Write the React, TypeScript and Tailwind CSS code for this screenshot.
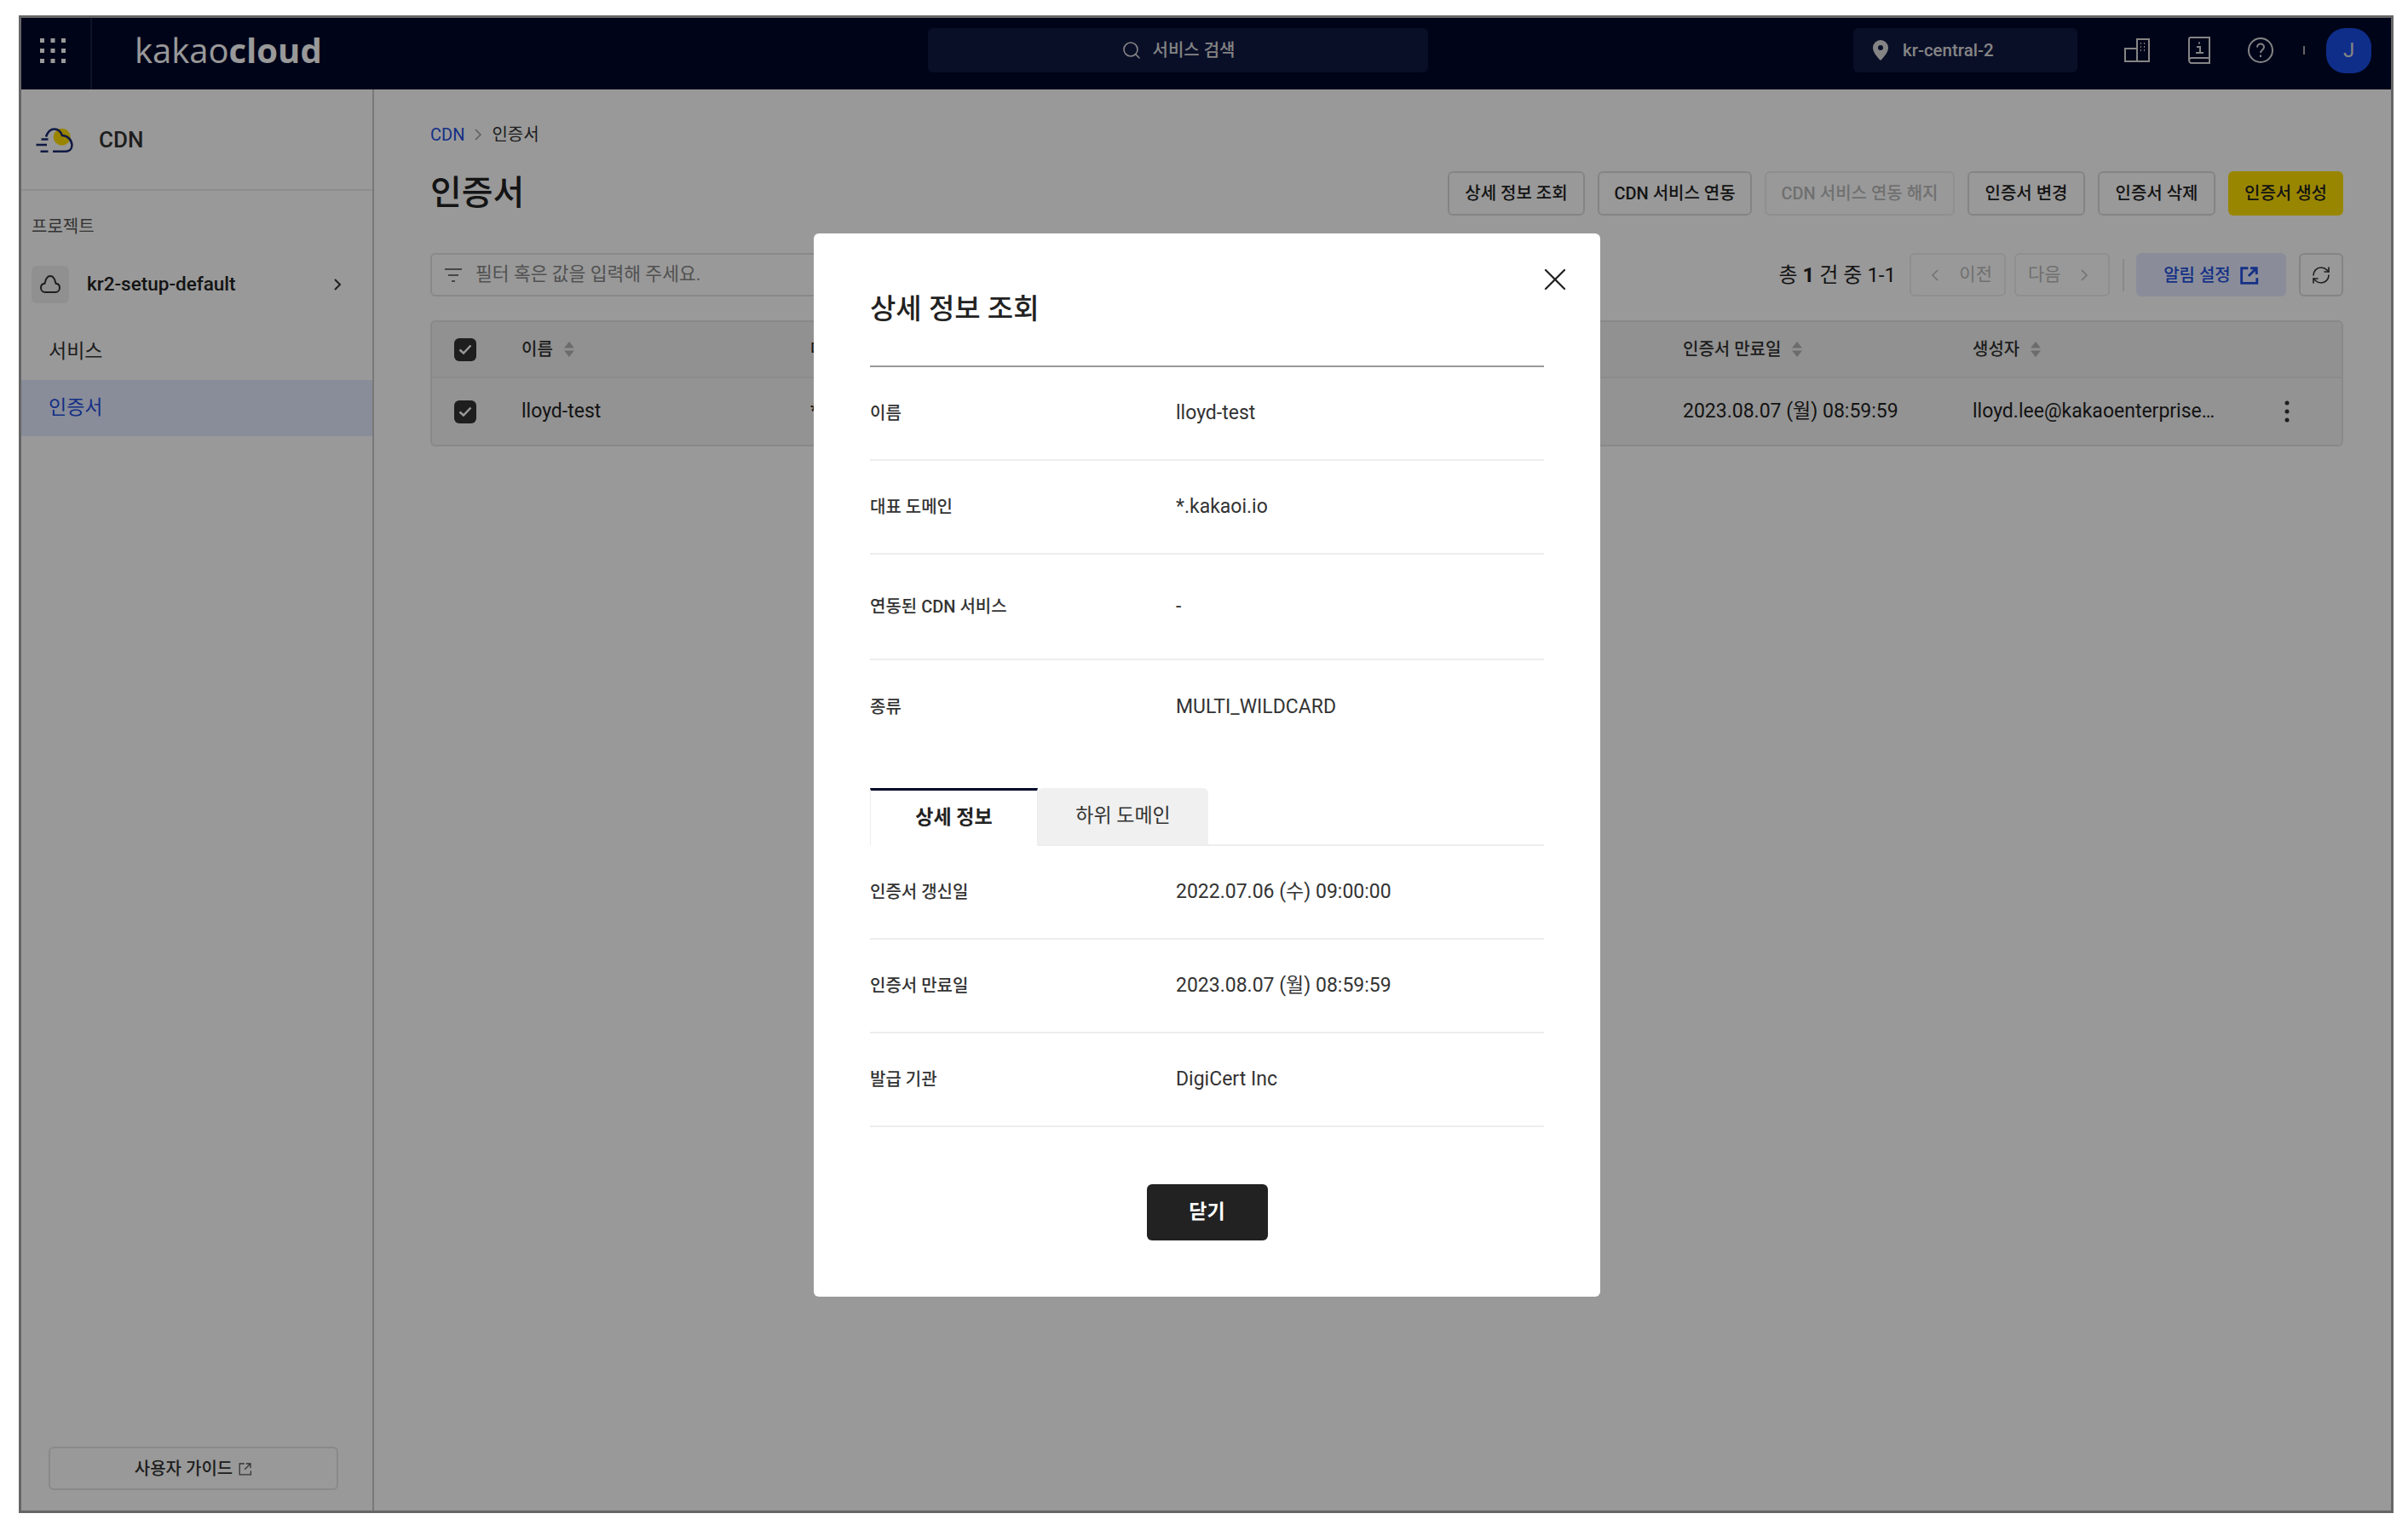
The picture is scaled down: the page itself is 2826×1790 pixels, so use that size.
import { RefreshCw, Search, X } from "lucide-react";

const actions = [
  { label: "상세 정보 조회", width: "w-[161px]" },
  { label: "CDN 서비스 연동", width: "w-[181px]" },
  { label: "CDN 서비스 연동 해지", width: "w-[223px]", disabled: true },
  { label: "인증서 변경", width: "w-[138px]" },
  { label: "인증서 삭제", width: "w-[138px]" },
];

const topRows = [
  { label: "이름", value: "lloyd-test", height: "h-[110px]" },
  { label: "대표 도메인", value: "*.kakaoi.io", height: "h-[110px]" },
  { label: "연동된 CDN 서비스", value: "-", height: "h-[124px]" },
];

const detailRows = [
  { label: "인증서 갱신일", value: "2022.07.06 (수) 09:00:00" },
  { label: "인증서 만료일", value: "2023.08.07 (월) 08:59:59" },
  { label: "발급 기관", value: "DigiCert Inc" },
];

function SortIcon() {
  return (
    <svg width="14" height="20" viewBox="0 0 14 20" className="ml-[12px]">
      <path d="M7 1l6 7.500H1z" fill="#b4b4b4" />
      <path d="M7 19l6-7.500H1z" fill="#b4b4b4" />
    </svg>
  );
}

function Check() {
  return (
    <div className="flex h-[27px] w-[26px] items-center justify-center rounded-[6px] bg-[#333]">
      <svg width="18" height="18" viewBox="0 0 18 18" fill="none">
        <path d="M2.500 9.500l4.500 4 8.500-9" stroke="#fff" strokeWidth="2.400" />
      </svg>
    </div>
  );
}

function ExternalIcon({ size, color, width }: { size: number; color: string; width: number }) {
  return (
    <svg width={size} height={size} viewBox="0 0 20 20" fill="none" stroke={color} strokeWidth={width}>
      <path d="M8.500 2.500H1.500V18.500H18V13" />
      <path d="M11 2.500h6.500V9M17.500 2.500L9 11" />
    </svg>
  );
}

function CdnLogo() {
  return (
    <svg width="44" height="30" viewBox="0 0 44 30" fill="none">
      <circle cx="30.700" cy="10.700" r="10" fill="#ffdd00" />
      <path
        d="M12 10.500C14 4.500 18 1.500 22 1.500C26 1.500 29 4 31 9C37 9 42 14 42.500 20C42.500 25 39 27.700 35 27.700H20"
        stroke="#1b2a70"
        strokeWidth="2.500"
      />
      <path d="M6.500 13.500h8M.5 20h12.500M5.500 27.700h9" stroke="#1b2a70" strokeWidth="2.500" />
    </svg>
  );
}

function Sidebar() {
  return (
    <aside className="flex w-[414px] shrink-0 flex-col border-r-2 border-[#c9c9c9] bg-white">
      <div className="flex h-[119px] items-center border-b-2 border-[#ececec] pl-[17px] pt-[2px]">
        <CdnLogo />
        <span className="ml-[30px] text-[26px] font-medium text-[#333]">CDN</span>
      </div>
      <div className="pl-[12px] pt-[29px] text-[20px] leading-[26px] text-[#555]">프로젝트</div>
      <div className="mt-[33px] flex h-[44px] items-center pl-[12px] pr-[36px]">
        <div className="flex h-[44px] w-[44px] items-center justify-center rounded-[6px] bg-[#f0f0f0]">
          <svg width="26" height="26" viewBox="0 0 26 26" fill="none" stroke="#333" strokeWidth="2">
            <path d="M7 22c-3 0-5-2.400-5-5.300 0-2.700 2-4.700 4.500-5C7.500 6.500 10 3 13 3s5.500 3.500 6.500 8.700c2.500.3 4.500 2.300 4.500 5 0 2.900-2 5.300-5 5.300z" />
          </svg>
        </div>
        <span className="ml-[21px] text-[22.500px] font-medium text-[#222]">kr2-setup-default</span>
        <svg width="10" height="16" viewBox="0 0 10 16" fill="none" stroke="#333" strokeWidth="2" className="ml-auto">
          <path d="M2 2l6 6-6 6" />
        </svg>
      </div>
      <div className="mt-[24px] flex h-[66px] items-center pl-[32px] text-[23px] text-[#333]">서비스</div>
      <div className="flex h-[66px] items-center bg-[#e4ebff] pl-[32px] text-[23px] text-[#2450e0]">인증서</div>
      <div className="mb-[24px] ml-[32px] mr-[40px] mt-auto flex h-[51px] items-center justify-center gap-[7px] rounded-[6px] border-2 border-[#e4e4e4] text-[20px] font-medium text-[#333]">
        사용자 가이드
        <ExternalIcon size={16} color="#555" width={1.6} />
      </div>
    </aside>
  );
}

function Header() {
  return (
    <header className="flex h-[84px] shrink-0 items-center bg-[#00082a] pb-[8px]">
      <div className="flex h-[84px] w-[83px] items-center justify-center self-start border-r-2 border-[#1b2140] pb-[8px] pr-[8px]">
        <svg width="30" height="29" viewBox="0 0 30 29" fill="#fff">
          <rect x="0" y="0" width="5" height="5" />
          <rect x="12.500" y="0" width="5" height="5" />
          <rect x="25" y="0" width="5" height="5" />
          <rect x="0" y="12" width="5" height="5" />
          <rect x="12.500" y="12" width="5" height="5" />
          <rect x="25" y="12" width="5" height="5" />
          <rect x="0" y="24" width="5" height="5" />
          <rect x="12.500" y="24" width="5" height="5" />
          <rect x="25" y="24" width="5" height="5" />
        </svg>
      </div>
      <div className="w-[981px] pl-[50px] font-['Open_Sans',sans-serif] text-[40px] leading-none text-white">
        kakao<span className="font-bold">cloud</span>
      </div>
      <div className="flex h-[52px] w-[587px] items-center justify-center gap-[13px] rounded-[6px] bg-[#121a44] text-[20px] font-medium text-[#ddd]">
        <Search size={24} strokeWidth={1.6} color="#ddd" />
        서비스 검색
      </div>
      <div className="ml-[499px] flex h-[52px] w-[263px] items-center rounded-[6px] bg-[#121a44] pl-[23px] text-[20.500px] font-medium text-[#ddd]">
        <svg width="18" height="24" viewBox="0 0 18 24" fill="#ddd">
          <path d="M9 0a9 9 0 0 1 9 9c0 5-5 11-9 15C5 20 0 14 0 9a9 9 0 0 1 9-9zm0 6a3 3 0 1 0 0 6 3 3 0 0 0 0-6z" />
        </svg>
        <span className="ml-[17px]">kr-central-2</span>
      </div>
      <svg width="30" height="28" viewBox="0 0 30 28" fill="none" stroke="#ddd" strokeWidth="2" className="ml-[55px]">
        <path d="M1 12h14v15H1zM15 1h14v26H15z" />
        <path d="M19 6h1M23 6h1M19 10h1M23 10h1M19 14h1M23 14h1" strokeWidth="2" />
      </svg>
      <svg width="26" height="32" viewBox="0 0 26 32" fill="none" stroke="#ddd" strokeWidth="2" className="ml-[45px]">
        <path d="M1 27V3a2 2 0 0 1 2-2h22v24H4c-2 0-3 1-3 2.500S2 31 4 31h21v-6" />
        <path d="M10 12h4v7M9 19h9M13 6.500v2" />
      </svg>
      <svg width="30" height="30" viewBox="0 0 30 30" fill="none" stroke="#ddd" strokeWidth="2" className="ml-[44px]">
        <circle cx="15" cy="15" r="14" />
        <path d="M11 11.500c0-2.500 2-4 4-4s4 1.500 4 3.800c0 3.500-4 3.500-4 6.700M15 20.500v2.500" />
      </svg>
      <div className="ml-[35px] h-[10px] w-[2px] bg-[#aaa]" />
      <div className="ml-[25px] flex h-[53px] w-[53px] items-center justify-center rounded-[22px] bg-[#1a4ee6] text-[24px] text-[#ddd]">
        J
      </div>
    </header>
  );
}

function Main() {
  return (
    <main className="flex-1 bg-white pl-[66px] pr-[56px] pt-[40px]">
      <div className="flex h-[26px] items-center text-[20px] text-[#333]">
        <span className="text-[#2450e0]">CDN</span>
        <svg width="8" height="14" viewBox="0 0 8 14" fill="none" stroke="#999" strokeWidth="1.500" className="mx-[12px]">
          <path d="M1 1l6 6-6 6" />
        </svg>
        인증서
      </div>
      <div className="mt-[30px] flex h-[52px] items-center justify-between">
        <h1 className="text-[40px] font-medium text-[#222]">인증서</h1>
        <div className="flex gap-[15px]">
          {actions.map((action) => (
            <button
              key={action.label}
              className={`h-[52px] rounded-[6px] border-2 text-[20px] font-medium ${action.width} ${
                action.disabled ? "border-[#efefef] text-[#bbb]" : "border-[#dddddd] text-[#222]"
              }`}
            >
              {action.label}
            </button>
          ))}
          <button className="h-[52px] w-[135px] rounded-[6px] bg-[#ffdf00] text-[20px] font-medium text-[#222]">
            인증서 생성
          </button>
        </div>
      </div>
      <div className="mt-[44px] flex h-[51px] items-center">
        <div className="flex h-full w-[900px] items-center rounded-[6px] border-2 border-[#e4e4e4] pl-[14px] text-[21.500px] text-[#888]">
          <svg width="22" height="18" viewBox="0 0 22 18" fill="none" stroke="#777" strokeWidth="2">
            <path d="M1 2h20M5 9h12M9 16h4" />
          </svg>
          <span className="ml-[15px]">필터 혹은 값을 입력해 주세요.</span>
        </div>
        <div className="ml-auto text-[24px] text-[#222]">
          총 <b>1</b> 건 중 1-1
        </div>
        <div className="ml-[16px] flex h-full w-[113px] items-center justify-between rounded-[6px] border-2 border-[#eee] pl-[24px] pr-[14px] text-[21px] text-[#bbb]">
          <svg width="8" height="14" viewBox="0 0 8 14" fill="none" stroke="#bbb" strokeWidth="1.500">
            <path d="M7 1L1 7l6 6" />
          </svg>
          이전
        </div>
        <div className="ml-[10px] flex h-full w-[112px] items-center justify-between rounded-[6px] border-2 border-[#eee] pl-[14px] pr-[24px] text-[21px] text-[#bbb]">
          다음
          <svg width="8" height="14" viewBox="0 0 8 14" fill="none" stroke="#bbb" strokeWidth="1.500">
            <path d="M1 1l6 6-6 6" />
          </svg>
        </div>
        <div className="ml-[15px] h-[38px] w-[2px] bg-[#e4e4e4]" />
        <div className="ml-[14px] flex h-full w-[176px] items-center justify-center gap-[11px] rounded-[6px] bg-[#e6ecff] text-[20px] font-medium text-[#2450e0]">
          알림 설정
          <ExternalIcon size={22} color="#2450e0" width={2.6} />
        </div>
        <div className="ml-[15px] flex h-full w-[52px] items-center justify-center rounded-[6px] border-2 border-[#dddddd]">
          <RefreshCw size={24} strokeWidth={1.6} color="#333" />
        </div>
      </div>
      <div className="mt-[28px] overflow-hidden rounded-[6px] border-2 border-[#e4e4e4] bg-[#f6f6f6]">
        <div className="grid h-[66px] grid-cols-[79px_339px_1024px_340px_1fr] items-center border-b-2 border-[#eaeaea] bg-[#f2f2f2] pl-[26px] text-[20px] font-medium text-[#333]">
          <Check />
          <div className="flex items-center">
            이름
            <SortIcon />
          </div>
          <div>대표 도메인</div>
          <div className="flex items-center">
            인증서 만료일
            <SortIcon />
          </div>
          <div className="flex items-center">
            생성자
            <SortIcon />
          </div>
        </div>
        <div className="grid h-[78px] grid-cols-[79px_339px_1024px_340px_1fr] items-center pl-[26px] text-[23px] text-[#222]">
          <Check />
          <div>lloyd-test</div>
          <div>*.kakaoi.io</div>
          <div>2023.08.07 (월) 08:59:59</div>
          <div className="flex items-center">
            <span className="w-[288px] truncate">lloyd.lee@kakaoenterprise.com</span>
            <svg width="6" height="26" viewBox="0 0 6 26" fill="#333" className="ml-[78px]">
              <circle cx="3" cy="3" r="2.500" />
              <circle cx="3" cy="13" r="2.500" />
              <circle cx="3" cy="23" r="2.500" />
            </svg>
          </div>
        </div>
      </div>
    </main>
  );
}

function InfoRow({ label, value, height, last }: { label: string; value: string; height: string; last?: boolean }) {
  return (
    <div className={`flex items-center ${height} ${last ? "" : "border-b-2 border-[#ededed]"}`}>
      <div className="w-[359px] text-[20px] font-medium text-[#333]">{label}</div>
      <div className="text-[23px] text-[#333]">{value}</div>
    </div>
  );
}

function DetailModal() {
  return (
    <div className="absolute inset-0 flex items-center justify-center bg-black/40 pl-[2px] pt-[2px]">
      <div className="relative h-[1248px] w-[923px] rounded-[6px] bg-white px-[66px]">
        <X size={44} strokeWidth={1.300} color="#222" className="absolute right-[31px] top-[32px]" />
        <div className="h-[157px] border-b-2 border-[#999] pt-[67px] text-[33px] font-medium leading-[44px] text-[#222]">
          상세 정보 조회
        </div>
        {topRows.map((row) => (
          <InfoRow key={row.label} {...row} />
        ))}
        <InfoRow label="종류" value="MULTI_WILDCARD" height="h-[110px]" last />
        <div className="mt-[40px] flex h-[68px] border-b-2 border-[#ededed] text-[23px]">
          <div className="-mb-[2px] flex w-[197px] items-center justify-center border-x border-t-[3px] border-x-[#ededed] border-t-[#00082a] bg-white font-bold text-[#222]">
            상세 정보
          </div>
          <div className="flex w-[200px] items-center justify-center rounded-t-[6px] bg-[#f0f0f0] text-[#333]">
            하위 도메인
          </div>
        </div>
        {detailRows.map((row) => (
          <InfoRow key={row.label} {...row} height="h-[110px]" />
        ))}
        <div className="mt-[67px] flex justify-center">
          <button className="h-[66px] w-[142px] rounded-[6px] bg-[#222] text-[23px] font-bold text-white">닫기</button>
        </div>
      </div>
    </div>
  );
}

export default function App() {
  return (
    <div className="h-[1790px] w-[2826px] bg-white pb-[14px] pl-[22px] pr-[17px] pt-[18px] font-[Roboto,'Noto_Sans_CJK_KR',sans-serif]">
      <div className="relative flex h-full flex-col overflow-hidden border-[3px] border-[#666]">
        <Header />
        <div className="flex flex-1">
          <Sidebar />
          <Main />
        </div>
        <DetailModal />
      </div>
    </div>
  );
}
